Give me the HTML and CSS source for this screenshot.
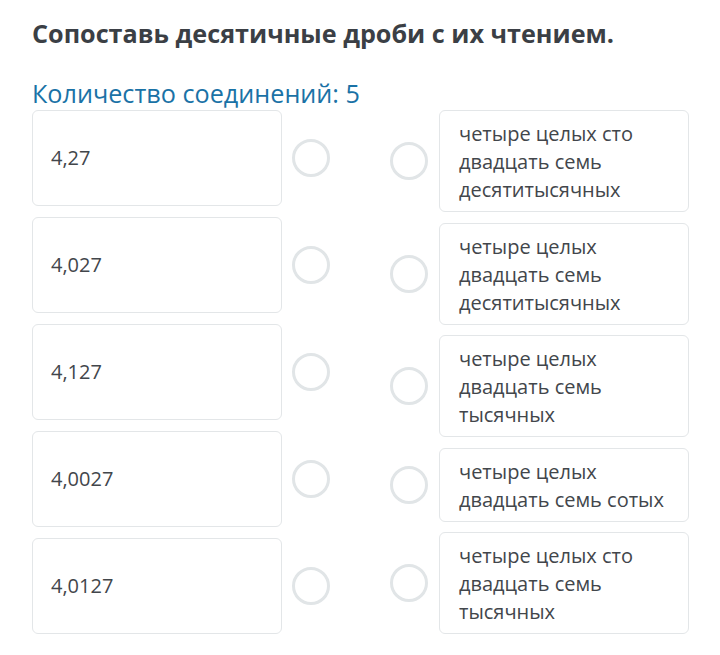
FILE: index.html
```html
<!DOCTYPE html>
<html lang="ru">
<head>
<meta charset="utf-8">
<link rel="stylesheet" href="styles.css">
</head>
<body>
<div class="page">
  <h1 class="title">Сопоставь десятичные дроби с их чтением.</h1>
  <div class="count">Количество соединений: 5</div>
  <div class="board">
    <div class="col col-left">
      <div class="item left"><div class="card"><span>4,27</span></div><div class="dot"></div></div>
      <div class="item left"><div class="card"><span>4,027</span></div><div class="dot"></div></div>
      <div class="item left"><div class="card"><span>4,127</span></div><div class="dot"></div></div>
      <div class="item left"><div class="card"><span>4,0027</span></div><div class="dot"></div></div>
      <div class="item left"><div class="card"><span>4,0127</span></div><div class="dot"></div></div>
    </div>
    <div class="col col-right">
      <div class="item right"><div class="dot"></div><div class="card">четыре целых сто двадцать семь десятитысячных</div></div>
      <div class="item right"><div class="dot"></div><div class="card">четыре целых двадцать семь десятитысячных</div></div>
      <div class="item right"><div class="dot"></div><div class="card">четыре целых двадцать семь тысячных</div></div>
      <div class="item right"><div class="dot"></div><div class="card">четыре целых двадцать семь сотых</div></div>
      <div class="item right"><div class="dot"></div><div class="card">четыре целых сто двадцать семь тысячных</div></div>
    </div>
  </div>
</div>
</body>
</html>
```
FILE: styles.css
```css
html, body {
  margin: 0;
  padding: 0;
  background: #ffffff;
}
body {
  font-family: "Open Sans", "Liberation Sans", sans-serif;
  color: #3d4146;
}
.page {
  padding: 15px 31px 0 32px;
}
.title {
  margin: 0;
  font-size: 25.2px;
  font-weight: 700;
  line-height: 36px;
  color: #3b3f45;
  white-space: nowrap;
}
.count {
  margin-top: 26px;
  font-size: 25.2px;
  line-height: 32px;
  color: #1a72a6;
}
.board {
  display: flex;
  justify-content: space-between;
  margin-top: 1px;
  width: 657px;
}
.col {
  display: flex;
  flex-direction: column;
  height: 524px;
  justify-content: space-between;
}
.item {
  display: flex;
  align-items: center;
}
.card {
  box-sizing: border-box;
  width: 250px;
  border: 1px solid #e3e6e8;
  border-radius: 6px;
  background: #fff;
  font-size: 20px;
  line-height: 28px;
  color: #42464b;
}
.left .card {
  height: 96px;
  display: flex;
  align-items: center;
  padding: 0 18px;
}
.right .card {
  padding: 9px 10px 7px 19px;
}
.dot {
  box-sizing: border-box;
  width: 38px;
  height: 38px;
  border: 3px solid #e1e5e7;
  border-radius: 50%;
  flex: none;
}
.left .dot {
  margin-left: 10px;
}
.right .dot {
  margin-right: 11px;
}
```
